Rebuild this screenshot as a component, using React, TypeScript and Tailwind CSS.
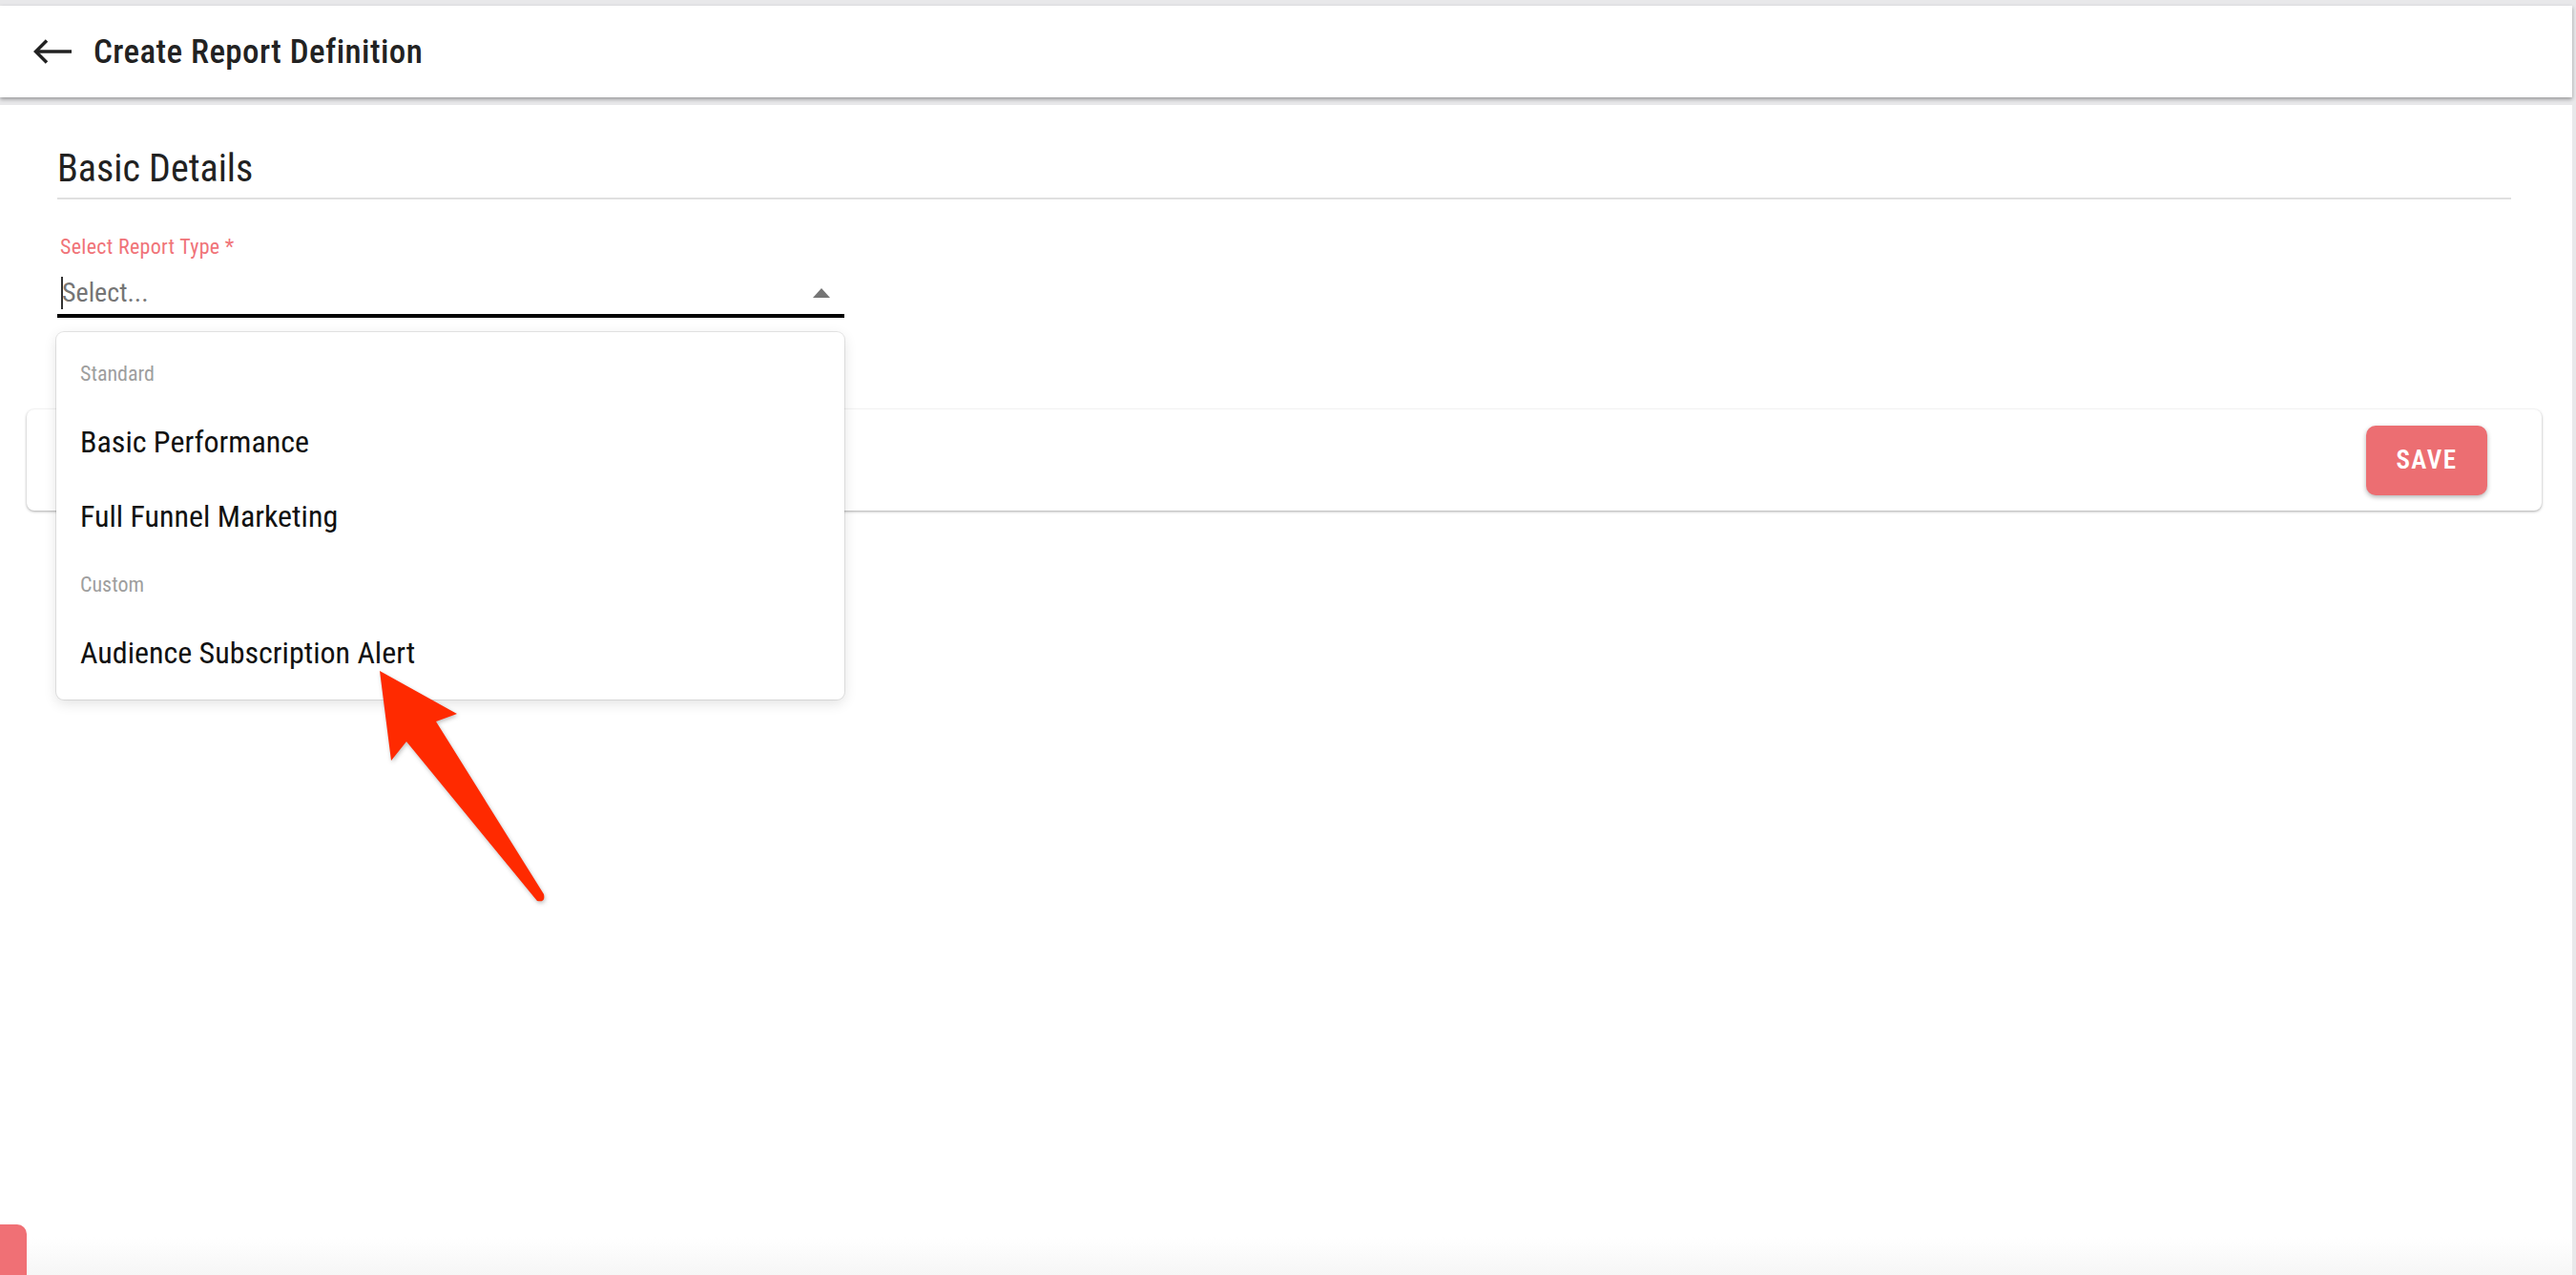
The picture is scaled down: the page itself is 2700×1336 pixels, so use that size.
const options = [
  { group: "Standard", items: ["Basic Performance", "Full Funnel Marketing"] },
  { group: "Custom", items: ["Audience Subscription Alert"] },
];

const BackArrow = () => (
  <svg width="40" height="26" viewBox="0 0 40 26" fill="none">
    <path d="M3 13H40" stroke="#222" strokeWidth="3.5" />
    <path d="M14 1.5L2.5 13L14 24.5" stroke="#222" strokeWidth="3.5" />
  </svg>
);

const CaretUp = () => (
  <svg width="18" height="10" viewBox="0 0 18 10">
    <path d="M0 10L9 0L18 10Z" fill="#757575" />
  </svg>
);

const Pointer = () => (
  <svg
    className="absolute z-30 left-[380px] top-[580px] w-[210px] h-[280px] drop-shadow-[1px_2px_2px_rgba(0,0,0,0.25)]"
    viewBox="380 690 210 280"
  >
    <path
      d="M398 703L479 748L457 756L570 937Q572 946 563 944L426 777L410 797Z"
      fill="#ff2a00"
    />
  </svg>
);

const App = () => {
  return (
    <div className="min-h-screen h-[1336px] flex flex-col bg-[#e8e8ea] pt-[6px] pr-[4px] font-['Roboto_Condensed',sans-serif] overflow-hidden">
      <header className="h-[96px] shrink-0 bg-white flex items-center pl-[35px] gap-[23px] shadow-[0_2px_4px_rgba(0,0,0,0.35)] relative z-10">
        <BackArrow />
        <h1 className="text-[35px] leading-none font-medium tracking-[0.4px] text-[#222]">
          Create Report Definition
        </h1>
      </header>

      <main className="relative flex-1 mt-[8px] bg-white pl-[28px] pr-[32px] pt-[47px]">
        <section className="px-[32px]">
          <h2 className="text-[40px] leading-none text-[#212121] pb-[10px] border-b-2 border-[#e0e0e0]">
            Basic Details
          </h2>

          <div className="w-[825px] mt-[39px]">
            <label className="block text-[22px] leading-none tracking-[0.3px] text-[#f07378] pl-[3px]">
              Select Report Type *
            </label>
            <div className="relative mt-[15px]">
              <div className="h-[48px] flex items-center border-b-4 border-black pl-[4px] pr-[15px]">
                <span className="w-[2px] h-[34px] bg-[#333] -mr-[1px]" />
                <span className="flex-1 text-[28px] leading-none text-[#757575]">Select...</span>
                <CaretUp />
              </div>

              <div className="absolute left-[-1px] right-0 top-[calc(100%+15px)] z-20 bg-white rounded-[8px] pt-[11px] pb-[10px] shadow-[0_0_0_1px_rgba(0,0,0,0.09),0_4px_14px_rgba(0,0,0,0.12)]">
                {options.map((o) => (
                  <div key={o.group}>
                    <div className="h-[65px] flex items-center pl-[25px] text-[22px] leading-none text-[#9e9e9e]">
                      {o.group}
                    </div>
                    {o.items.map((item) => (
                      <div
                        key={item}
                        className="h-[78px] flex items-center pl-[25px] text-[32px] leading-none text-[#111]"
                      >
                        {item}
                      </div>
                    ))}
                  </div>
                ))}
              </div>
            </div>
          </div>
        </section>

        <div className="mt-[96px] h-[106px] bg-white rounded-[8px] flex items-center justify-end pr-[57px] shadow-[0_1px_3px_rgba(0,0,0,0.35)]">
          <button className="w-[127px] h-[73px] rounded-[10px] bg-[#ec6e72] text-white text-[27px] font-semibold tracking-[1.5px] shadow-[0_2px_5px_rgba(0,0,0,0.3)]">
            SAVE
          </button>
        </div>

        <Pointer />

        <div className="absolute left-0 right-0 bottom-0 h-[40px] bg-linear-to-b from-white to-[#f6f6f6]" />
        <div className="absolute left-0 bottom-0 w-[28px] h-[53px] rounded-tr-[10px] bg-[#f07075]" />
      </main>
    </div>
  );
};

export default App;
